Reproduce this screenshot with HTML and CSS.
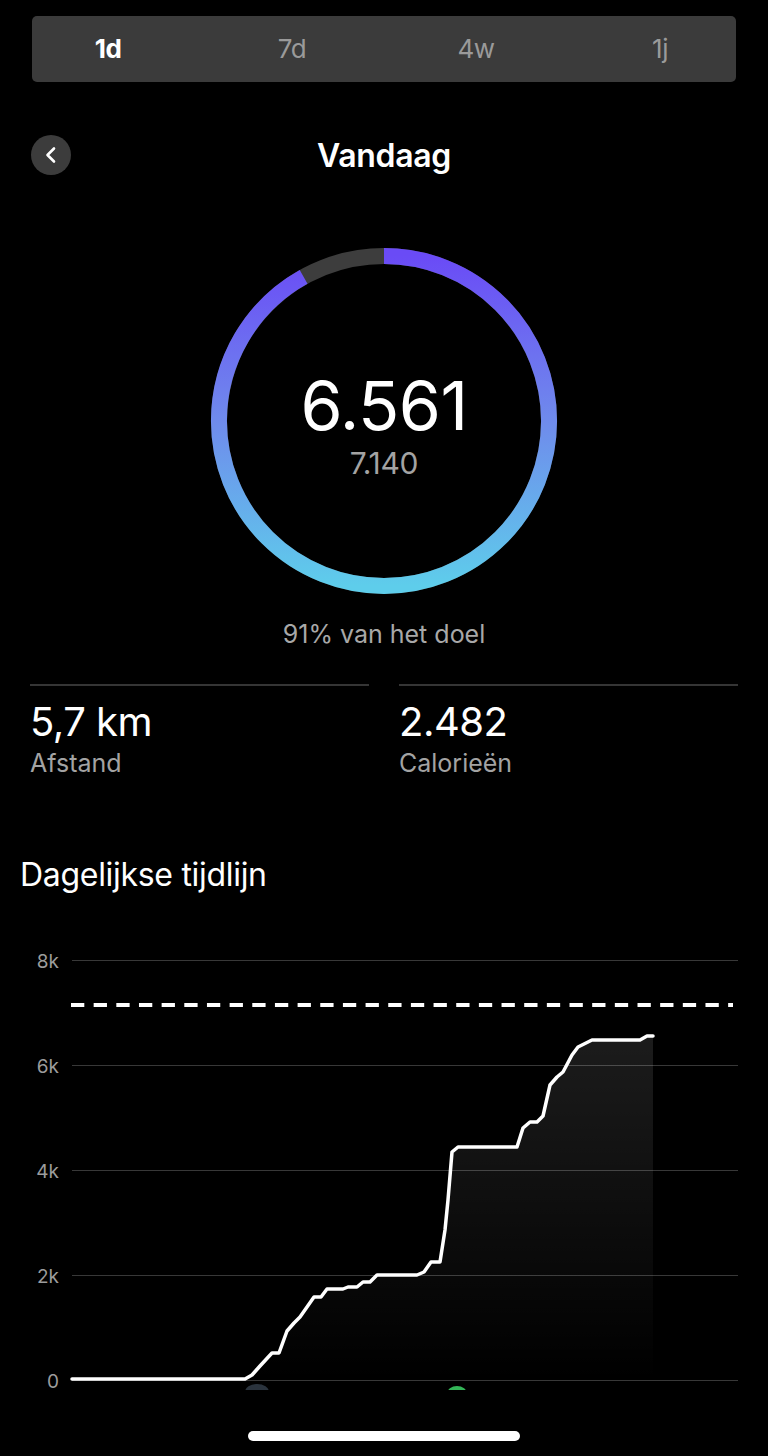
FILE: index.html
```html
<!DOCTYPE html>
<html lang="nl">
<head>
<meta charset="utf-8">
<title>Vandaag</title>
<link rel="stylesheet" href="styles.css">
</head>
<body>
<div class="page">
  <div class="seg">
    <div class="seg-inner">
      <span class="seg-item active">1d</span>
      <span class="seg-item">7d</span>
      <span class="seg-item">4w</span>
      <span class="seg-item">1j</span>
    </div>
  </div>

  <div class="header">
    <div class="back">
      <svg width="40" height="40" viewBox="0 0 40 40"><path d="M23 13.5 L16.5 20 L23 26.5" fill="none" stroke="#fff" stroke-width="2.6" stroke-linecap="round" stroke-linejoin="round"/></svg>
    </div>
    <div class="title">Vandaag</div>
    <div class="spacer"></div>
  </div>

  <div class="ring">
    <svg class="ring-svg" width="360" height="360" viewBox="0 0 360 360">
      <defs>
        <linearGradient id="rg" x1="0" y1="15" x2="0" y2="345" gradientUnits="userSpaceOnUse">
          <stop offset="0" stop-color="#6a4bf6"/>
          <stop offset="0.5" stop-color="#6f8bec"/>
          <stop offset="1" stop-color="#5ecdeb"/>
        </linearGradient>
      </defs>
      <circle cx="180" cy="180" r="165" fill="none" stroke="#3d3d3d" stroke-width="16"/>
      <path d="M180,15 A165,165 0 1 1 180,345 A165,165 0 1 1 180,15" fill="none" stroke="url(#rg)" stroke-width="16"
        pathLength="100" stroke-dasharray="91.9 100"/>
    </svg>
    <div class="ring-text">
      <div class="steps">6.561</div>
      <div class="goal">7.140</div>
    </div>
  </div>

  <div class="percent">91% van het doel</div>

  <div class="stats">
    <div class="stat">
      <div class="stat-value">5,7 km</div>
      <div class="stat-label">Afstand</div>
    </div>
    <div class="stat">
      <div class="stat-value">2.482</div>
      <div class="stat-label">Calorieën</div>
    </div>
  </div>

  <h2 class="section-title">Dagelijkse tijdlijn</h2>

  <div class="chart">
    <svg width="768" height="472" viewBox="0 0 768 472">
      <defs>
        <linearGradient id="fill" x1="0" y1="106" x2="0" y2="450" gradientUnits="userSpaceOnUse">
          <stop offset="0" stop-color="#ffffff" stop-opacity="0.11"/>
          <stop offset="1" stop-color="#ffffff" stop-opacity="0"/>
        </linearGradient>
        <clipPath id="clipTop">
          <rect x="0" y="0" width="768" height="460"/>
        </clipPath>
      </defs>
      <g class="grid">
        <line x1="72" y1="30.5" x2="738" y2="30.5"/>
        <line x1="72" y1="135.5" x2="738" y2="135.5"/>
        <line x1="72" y1="240.5" x2="738" y2="240.5"/>
        <line x1="72" y1="345.5" x2="738" y2="345.5"/>
        <line x1="72" y1="450.5" x2="738" y2="450.5"/>
      </g>
      <g class="axis">
        <text x="59" y="31">8k</text>
        <text x="59" y="136">6k</text>
        <text x="59" y="241">4k</text>
        <text x="59" y="346">2k</text>
        <text x="59" y="451">0</text>
      </g>
      <path class="area" d="M72,449 L245,449 L252,445 L260,436 L272,423 L279,423 L287,401 L294,393 L300,387 L314,367 L321,367 L327,359 L343,359 L348,357 L357,357 L363,352 L370,352 L377,345 L417,345 L424,342 L431,332 L440,332 L445,300 L448,270 L452,222 L458,217 L517,217 L523,198 L530,192 L537,192 L543,186 L550,155 L557,147 L563,142 L572,125 L578,117 L592,110 L640,110 L647,106 L653,106 L653,450 L72,450 Z"/>
      <line class="target" x1="71" y1="75" x2="733" y2="75"/>
      <path class="line" d="M72,449 L245,449 L252,445 L260,436 L272,423 L279,423 L287,401 L294,393 L300,387 L314,367 L321,367 L327,359 L343,359 L348,357 L357,357 L363,352 L370,352 L377,345 L417,345 L424,342 L431,332 L440,332 L445,300 L448,270 L452,222 L458,217 L517,217 L523,198 L530,192 L537,192 L543,186 L550,155 L557,147 L563,142 L572,125 L578,117 L592,110 L640,110 L647,106 L653,106"/>
      <g clip-path="url(#clipTop)">
        <ellipse cx="257" cy="462" rx="12" ry="8" fill="#2a333d"/>
        <ellipse cx="457" cy="464" rx="10" ry="8" fill="#33b557"/>
      </g>
    </svg>
  </div>

  <div class="home"></div>
</div>
</body>
</html>
```

FILE: styles.css
```css
* { box-sizing: border-box; }

html, body {
  margin: 0;
  padding: 0;
  background: #000;
}

body {
  font-family: Inter, "Noto Sans", "Liberation Sans", sans-serif;
  color: #fff;
  width: 768px;
  height: 1456px;
  overflow: hidden;
}

.page {
  display: flex;
  flex-direction: column;
}

/* segmented control */
.seg {
  margin: 16px 32px 0;
  height: 66px;
  background: #3b3b3b;
  border-radius: 5px;
  display: flex;
  align-items: center;
}

.seg-inner {
  margin: 0 -16px;
  flex: 1;
  display: grid;
  grid-template-columns: repeat(4, 1fr);
  align-items: center;
}

.seg-item {
  text-align: center;
  font-size: 26px;
  line-height: 30px;
  color: #9a9a9a;
  letter-spacing: -0.5px;
}

.seg-item.active {
  color: #fff;
  font-weight: 700;
}

/* header */
.header {
  margin: 53px 0 0;
  padding: 0 31px;
  height: 40px;
  display: flex;
  align-items: center;
  justify-content: space-between;
}

.back {
  width: 40px;
  height: 40px;
  border-radius: 50%;
  background: #3c3c3c;
  display: flex;
}

.spacer { width: 40px; }

.title {
  font-size: 32px;
  font-weight: 600;
  letter-spacing: -0.3px;
  line-height: 40px;
  padding-top: 2px;
}

/* ring */
.ring {
  margin-top: 66px;
  display: grid;
  justify-content: center;
  align-items: center;
}

.ring-svg, .ring-text {
  grid-area: 1 / 1;
}

.ring-text {
  display: flex;
  flex-direction: column;
  align-items: center;
  padding-top: 10px;
}

.steps {
  font-size: 68px;
  line-height: 64px;
  font-weight: 400;
  letter-spacing: -0.5px;
}

.goal {
  margin-top: 10px;
  font-size: 30px;
  line-height: 32px;
  color: #a3a3a3;
  letter-spacing: -0.3px;
}

.percent {
  margin-top: 18px;
  text-align: center;
  font-size: 25px;
  line-height: 30px;
  color: #a8a8a8;
}

/* stats */
.stats {
  margin: 35px 30px 0;
  display: grid;
  grid-template-columns: 1fr 1fr;
  column-gap: 30px;
}

.stat {
  border-top: 2px solid #353535;
  padding-top: 14px;
}

.stat-value {
  font-size: 40px;
  line-height: 44px;
  letter-spacing: -0.5px;
}

.stat-label {
  margin-top: 5px;
  font-size: 25px;
  line-height: 28px;
  color: #a3a3a3;
}

.section-title {
  margin: 80px 0 0 20px;
  font-size: 32px;
  line-height: 36px;
  font-weight: 400;
  letter-spacing: -0.3px;
}

/* chart */
.chart {
  margin-top: 37px;
  height: 472px;
}

.chart svg { display: block; }

.grid line {
  stroke: #383838;
  stroke-width: 1;
}

.axis text {
  fill: #9c9c9c;
  font-size: 19px;
  text-anchor: end;
  dominant-baseline: central;
}

.area { fill: url(#fill); }

.target {
  stroke: #fff;
  stroke-width: 4;
  stroke-dasharray: 13.3 9.36;
}

.line {
  fill: none;
  stroke: #fff;
  stroke-width: 3.5;
  stroke-linejoin: round;
  stroke-linecap: round;
}

.home {
  margin: 29px auto 0;
  width: 272px;
  height: 10px;
  border-radius: 5px;
  background: #fff;
}
```
